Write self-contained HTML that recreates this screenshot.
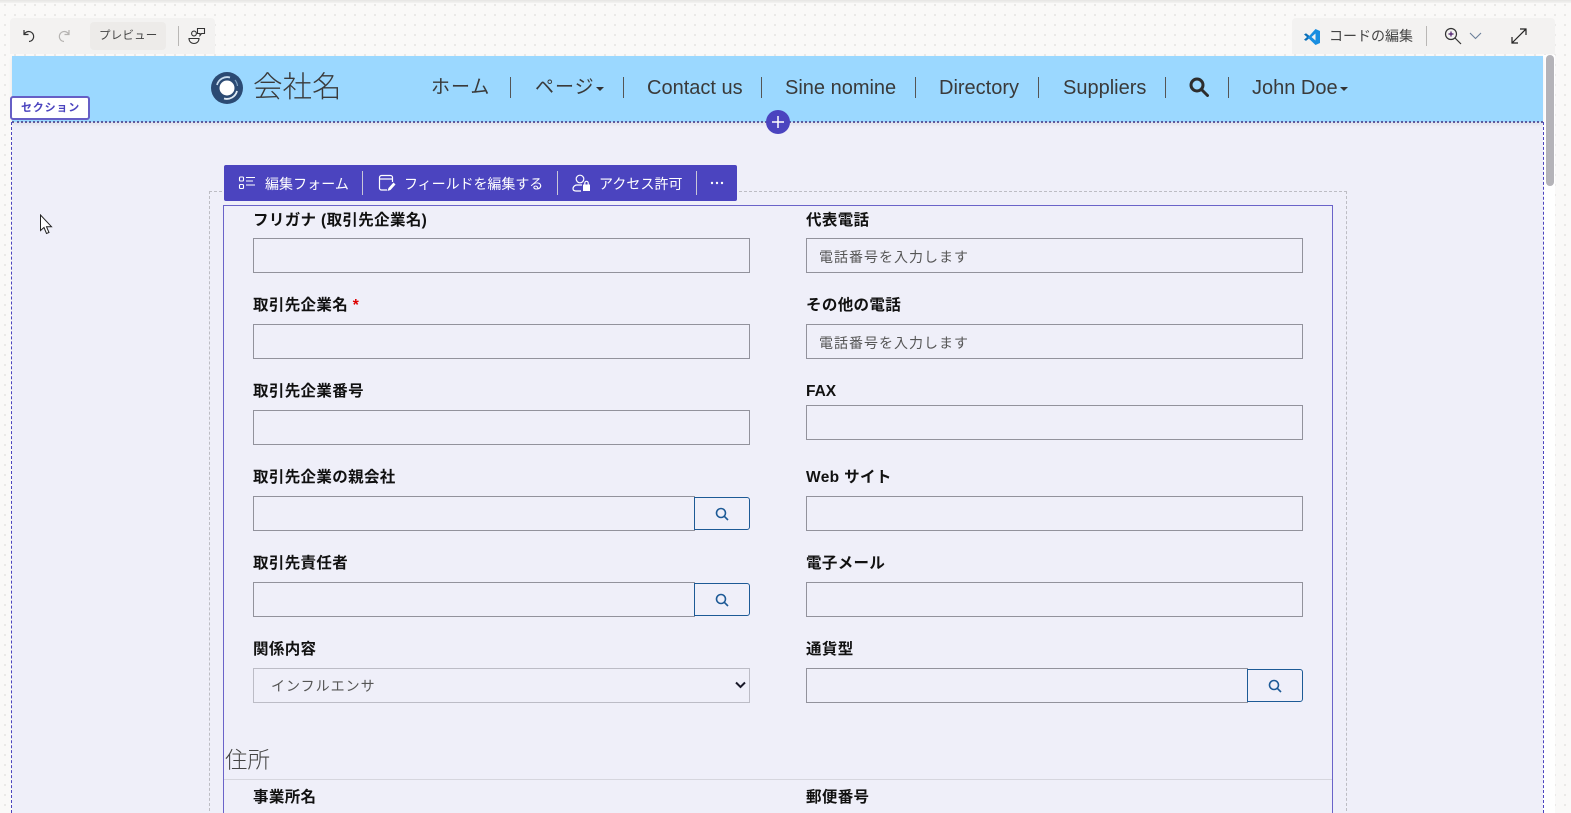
<!DOCTYPE html>
<html lang="ja"><head><meta charset="utf-8"><title>Form</title>
<style>
*{box-sizing:border-box}
html,body{margin:0;padding:0;width:1571px;height:813px;overflow:hidden}
body{position:relative;background-color:#faf9f8;background-image:radial-gradient(circle,#e9e8e6 1px,transparent 1.2px);background-size:10px 10px;font-family:"Liberation Sans","Noto Sans CJK JP",sans-serif;color:#222}
div,span,svg{position:absolute;white-space:nowrap}
.tb{background:#f3f2f1;border-radius:4px 4px 0 0}
.nav{font-size:20px;line-height:24px;top:76px;color:#3a3a3a}
.nsep{width:1px;top:77px;height:21px;background:#555}
.caret{top:87px;width:0;height:0;border-left:4px solid transparent;border-right:4px solid transparent;border-top:4px solid #333}
.pt{font-size:14px;line-height:20px;top:174px;color:#fff;letter-spacing:.05px}
.psep{width:1px;top:171px;height:24px;background:#c9c7d8}
.lb{font-size:15.5px;font-weight:700;line-height:20px;color:#111;letter-spacing:.35px}
.in{height:35px;border:1px solid #92929c;background:#efeff9}
.ph{font-size:14px;line-height:20px;color:#555;letter-spacing:1px}
.btn{width:56px;height:33px;border:1px solid #1d5a96;border-radius:0 3px 3px 0;background:#efeff9}
.btn svg{left:20px;top:9px}
</style></head>
<body>
<div style="left:0;top:0;width:1571px;height:3px;background:linear-gradient(#e6e5e3,#f3f2f1)"></div>

<!-- left toolbar -->
<div class="tb" style="left:10px;top:18px;width:205px;height:36px"></div>
<svg style="left:21px;top:28px" width="16" height="16" viewBox="0 0 16 16" fill="none" stroke="#333" stroke-width="1.2"><path d="M3 2v4.500h4.500M3.200 6.300A5 5 0 1 1 8 13.500"/></svg>
<svg style="left:56px;top:28px" width="16" height="16" viewBox="0 0 16 16" fill="none" stroke="#b5b3b1" stroke-width="1.2"><path d="M13 2v4.500H8.500M12.800 6.300A5 5 0 1 0 8 13.500"/></svg>
<div style="left:90px;top:22px;width:76px;height:28px;background:#edebe9;border-radius:4px"></div>
<span style="left:99px;top:28px;font-size:11.500px;line-height:17px;color:#444;letter-spacing:.2px">プレビュー</span>
<div style="left:178px;top:26px;width:1px;height:20px;background:#b9b7b5"></div>
<svg style="left:188px;top:27px" width="18" height="18" viewBox="0 0 18 18" fill="none" stroke="#333" stroke-width="1.100"><circle cx="6" cy="6.500" r="2.400"/><path d="M1 11.500h10c0 3-2.200 5-5 5s-5-2-5-5zM9.500 1.500h7v5h-3l-1.500 2v-2H9.500z"/></svg>

<!-- right toolbar -->
<div class="tb" style="left:1292px;top:18px;width:263px;height:36px"></div>
<svg style="left:1303px;top:28px" width="18" height="18" viewBox="0 0 18 18"><path fill="#0a6fb8" d="M1 6.500l2-1.200 4 3.100-.1 1.400L3 12.900l-2-1.200L4 9z"/><path fill="#1a8ee0" d="M12.500 1 17 3v12l-4.500 2L6 10.800l-1.500-1.300 1.500-1.200zM12.500 5.500 8.500 9l4 3.500z"/></svg>
<span style="left:1329px;top:26px;font-size:14px;line-height:20px;color:#444">コードの編集</span>
<div style="left:1426px;top:26px;width:1px;height:20px;background:#b9b7b5"></div>
<svg style="left:1444px;top:27px" width="19" height="18" viewBox="0 0 19 18" fill="none" stroke="#333" stroke-width="1.200"><circle cx="7" cy="7" r="5.500"/><path d="M11 11l6 6"/><path d="M4.500 7h5M7 4.500v5" stroke="#4a1a6a"/></svg>
<svg style="left:1469px;top:32px" width="13" height="8" viewBox="0 0 13 8" fill="none" stroke="#6a7f9a" stroke-width="1.100"><path d="M1 1l5.500 5.500L12 1"/></svg>
<svg style="left:1511px;top:28px" width="16" height="16" viewBox="0 0 16 16" fill="none" stroke="#222" stroke-width="1.200"><path d="M1 15 15 1M9 1h6v6M1 9v6h6"/></svg>

<!-- scroll strip -->
<div style="left:1543px;top:55px;width:12px;height:758px;background:#fff"></div>
<div style="left:1546px;top:55px;width:8px;height:131px;background:#b4b3b8;border-radius:4px"></div>

<!-- page -->
<div style="left:12px;top:56px;width:1531px;height:757px;background:#efeff9"></div>
<div style="left:12px;top:56px;width:1531px;height:66px;background:#9bd8ff;box-shadow:0 2px 4px rgba(0,0,0,.08)"></div>
<div style="left:12px;top:121px;width:1531px;height:2px;border-top:2px dotted #4d4690;opacity:.85"></div>
<div style="left:11px;top:122px;width:1px;height:691px;border-left:1px dashed #4b44bf"></div>
<div style="left:1543px;top:122px;width:1px;height:691px;border-left:1px dashed #4b44bf"></div>

<!-- logo -->
<svg style="left:211px;top:72px" width="32" height="32" viewBox="0 0 32 32"><circle cx="16" cy="16" r="16" fill="#2b4a73"/><circle cx="16" cy="16" r="7.500" fill="#fff"/><path d="M6 13A10.500 10.500 0 0 1 19 5.500" fill="none" stroke="#c9dcee" stroke-width="1.800"/><path d="M26 19A10.500 10.500 0 0 1 13 26.500" fill="none" stroke="#dfeaf4" stroke-width="1.800"/><path d="M24 8A11 11 0 0 1 26.500 14" fill="none" stroke="#7fa0c0" stroke-width="1.200"/></svg>
<span style="left:253px;top:67px;font-size:29.500px;line-height:42px;color:#3a3a3a;font-weight:300">会社名</span>

<!-- nav -->
<span class="nav" style="left:431px;font-size:19px;letter-spacing:1px">ホーム</span>
<div class="nsep" style="left:510px"></div>
<span class="nav" style="left:535px;font-size:19px;letter-spacing:1px">ページ</span><div class="caret" style="left:596px"></div>
<div class="nsep" style="left:623px"></div>
<span class="nav" style="left:647px">Contact us</span>
<div class="nsep" style="left:761px"></div>
<span class="nav" style="left:785px">Sine nomine</span>
<div class="nsep" style="left:915px"></div>
<span class="nav" style="left:939px">Directory</span>
<div class="nsep" style="left:1038px"></div>
<span class="nav" style="left:1063px">Suppliers</span>
<div class="nsep" style="left:1165px"></div>
<svg style="left:1189px;top:77px" width="20" height="20" viewBox="0 0 20 20" fill="none" stroke="#2d2d2d" stroke-width="3"><circle cx="8" cy="8" r="6"/><path d="M12.500 12.500 18.500 18.500" stroke-linecap="round"/></svg>
<div class="nsep" style="left:1228px"></div>
<span class="nav" style="left:1252px">John Doe</span><div class="caret" style="left:1340px"></div>

<!-- section tag -->
<div style="left:10px;top:96px;width:80px;height:24px;background:#fff;border:2px solid #665fc6;border-radius:3px"></div>
<span style="left:21px;top:100px;font-size:11px;line-height:16px;font-weight:700;color:#4b44bf;letter-spacing:.8px">セクション</span>

<!-- plus -->
<div style="left:766px;top:110px;width:24px;height:24px;border-radius:50%;background:#4b44bf"></div>
<svg style="left:771px;top:115px" width="14" height="14" viewBox="0 0 14 14" stroke="#fff" stroke-width="1.500"><path d="M7 1v12M1 7h12"/></svg>

<!-- form frame -->
<div style="left:209px;top:191px;width:1138px;height:630px;border:1px dashed #bdbdc4"></div>
<div style="left:223px;top:205px;width:1110px;height:620px;border:1px solid #6a63c9"></div>

<!-- purple toolbar -->
<div style="left:224px;top:165px;width:513px;height:36px;background:#4b44bf;border-radius:2px"></div>
<svg style="left:238px;top:175px" width="18" height="16" viewBox="0 0 18 16" fill="none" stroke="#fff" stroke-width="1.100"><rect x="1.500" y="2" width="4" height="4" rx="1"/><rect x="1.500" y="9.500" width="4" height="4" rx="1"/><path d="M8 2.500h9M8 6h7M8 10h9"/></svg>
<span class="pt" style="left:265px">編集フォーム</span>
<div class="psep" style="left:362px"></div>
<svg style="left:378px;top:174px" width="18" height="18" viewBox="0 0 18 18" fill="none" stroke="#fff" stroke-width="1.200"><path d="M9 16H3.500A2 2 0 0 1 1.500 14V3.500a2 2 0 0 1 2-2h9a2 2 0 0 1 2 2V8M1.500 5h13"/><path d="M9.500 17l1-3 5-5.500 2 2-5 5.500z" fill="#fff" stroke="none"/></svg>
<span class="pt" style="left:404px;letter-spacing:-.05px">フィールドを編集する</span>
<div class="psep" style="left:557px"></div>
<svg style="left:572px;top:174px" width="19" height="18" viewBox="0 0 19 18" fill="none" stroke="#fff" stroke-width="1.200"><circle cx="8" cy="5" r="3.800"/><path d="M10 11H5a4 4 0 0 0-4 3.500c0 1.500 1 2.500 3 2.500h5"/><rect x="11" y="10.500" width="7" height="6.500" fill="#fff" stroke="none"/><path d="M12.800 10.500V9a1.700 1.700 0 0 1 3.400 0v1.500"/></svg>
<span class="pt" style="left:599px">アクセス許可</span>
<div class="psep" style="left:696px"></div>
<svg style="left:710px;top:181px" width="14" height="4" viewBox="0 0 14 4" fill="#fff"><circle cx="2" cy="2" r="1.200"/><circle cx="7" cy="2" r="1.200"/><circle cx="12" cy="2" r="1.200"/></svg>

<!-- left col -->
<span class="lb" style="left:253px;top:211px">フリガナ (取引先企業名)</span>
<div class="in" style="left:253px;top:238px;width:497px"></div>
<span class="lb" style="left:253px;top:296px">取引先企業名 <span style="position:static;color:#d00">*</span></span>
<div class="in" style="left:253px;top:324px;width:497px"></div>
<span class="lb" style="left:253px;top:382px">取引先企業番号</span>
<div class="in" style="left:253px;top:410px;width:497px"></div>
<span class="lb" style="left:253px;top:468px">取引先企業の親会社</span>
<div class="in" style="left:253px;top:496px;width:442px"></div>
<div class="btn" style="left:694px;top:497px"><svg width="14" height="14" viewBox="0 0 14 14" fill="none" stroke="#1d5a96" stroke-width="1.600"><circle cx="6" cy="6" r="4.500"/><path d="M9.300 9.300l3.700 3.700"/></svg></div>
<span class="lb" style="left:253px;top:554px">取引先責任者</span>
<div class="in" style="left:253px;top:582px;width:442px"></div>
<div class="btn" style="left:694px;top:583px"><svg width="14" height="14" viewBox="0 0 14 14" fill="none" stroke="#1d5a96" stroke-width="1.600"><circle cx="6" cy="6" r="4.500"/><path d="M9.300 9.300l3.700 3.700"/></svg></div>
<span class="lb" style="left:253px;top:640px">関係内容</span>
<div class="in" style="left:253px;top:668px;width:497px;border-color:#bcbcc6"></div>
<span class="ph" style="left:271px;top:676px">インフルエンサ</span>
<svg style="left:735px;top:681px" width="11" height="8" viewBox="0 0 11 8" fill="none" stroke="#1a1a2a" stroke-width="2"><path d="M1 1.500l4.500 4.500L10 1.500"/></svg>

<!-- right col -->
<span class="lb" style="left:806px;top:211px">代表電話</span>
<div class="in" style="left:806px;top:238px;width:497px"></div>
<span class="ph" style="left:819px;top:246.500px">電話番号を入力します</span>
<span class="lb" style="left:806px;top:296px">その他の電話</span>
<div class="in" style="left:806px;top:324px;width:497px"></div>
<span class="ph" style="left:819px;top:332.500px">電話番号を入力します</span>
<span class="lb" style="left:806px;top:382px;letter-spacing:0">FAX</span>
<div class="in" style="left:806px;top:405px;width:497px"></div>
<span class="lb" style="left:806px;top:468px">Web サイト</span>
<div class="in" style="left:806px;top:496px;width:497px"></div>
<span class="lb" style="left:806px;top:554px">電子メール</span>
<div class="in" style="left:806px;top:582px;width:497px"></div>
<span class="lb" style="left:806px;top:640px">通貨型</span>
<div class="in" style="left:806px;top:668px;width:442px"></div>
<div class="btn" style="left:1247px;top:669px"><svg width="14" height="14" viewBox="0 0 14 14" fill="none" stroke="#1d5a96" stroke-width="1.600"><circle cx="6" cy="6" r="4.500"/><path d="M9.300 9.300l3.700 3.700"/></svg></div>

<!-- address -->
<span style="left:225px;top:744px;font-size:22.500px;line-height:34px;color:#444;font-weight:300">住所</span>
<div style="left:224px;top:779px;width:1108px;height:1px;background:#d6d6de"></div>
<span class="lb" style="left:253px;top:788px">事業所名</span>
<span class="lb" style="left:806px;top:788px">郵便番号</span>

<!-- cursor -->
<svg style="left:39px;top:214px" width="15" height="22" viewBox="0 0 15 22" fill="#fff" stroke="#222" stroke-width="1"><path d="M1.500 1v15.500l3.500-3 2.500 6 2.500-1-2.500-5.800h5z"/></svg>
</body></html>
